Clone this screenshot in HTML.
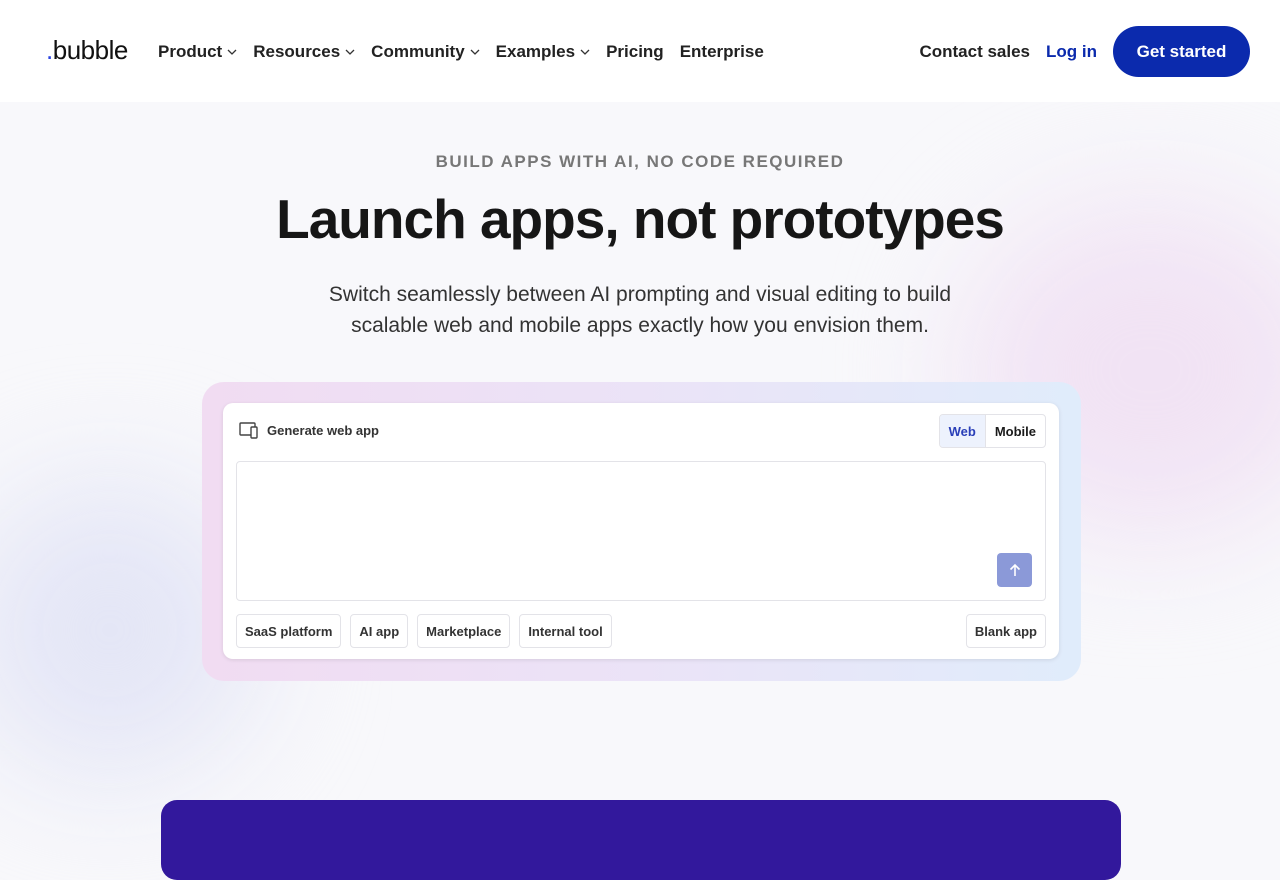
<!DOCTYPE html>
<html><head><meta charset="utf-8"><style>
*{box-sizing:border-box;margin:0;padding:0}
body{width:1280px;height:853px;overflow:hidden;font-family:"Liberation Sans",sans-serif;background:#f8f8fb;position:relative;color:#1a1a1a}
.blob{position:absolute;border-radius:50%;filter:blur(60px)}
header{position:absolute;top:0;left:0;width:1280px;height:102px;background:#fff;z-index:2}
.logo{position:absolute;left:46px;top:35px;font-size:26px;font-weight:400;letter-spacing:-0.5px;color:#111}
.logo i{color:#2b44e0;font-style:normal}
nav{position:absolute;left:158px;top:42px;display:flex;gap:16px;font-size:17px;font-weight:bold;color:#222}
nav span svg{margin-left:5px;vertical-align:2px}
.right{position:absolute;right:30px;top:26px;display:flex;align-items:center;font-size:17px;font-weight:bold}
.btn{background:#0b2aad;color:#fff;border-radius:26px;width:137px;height:51px;display:flex;align-items:center;justify-content:center;margin-left:16px}
.eyebrow{position:absolute;top:152px;width:100%;text-align:center;font-size:17px;letter-spacing:1.5px;color:#777;font-weight:bold}
h1{position:absolute;top:187px;width:100%;text-align:center;font-size:55px;font-weight:bold;letter-spacing:-1px;color:#161616}
.sub{position:absolute;top:279px;width:100%;text-align:center;font-size:21px;line-height:31px;color:#333}
.outer{position:absolute;left:202px;top:382px;width:879px;height:299px;border-radius:22px;background:linear-gradient(90deg,#f1dcf2,#ebe3f7 50%,#e0ecfb)}
.card{position:absolute;left:223px;top:403px;width:836px;height:256px;background:#fff;border-radius:10px;box-shadow:0 1px 4px rgba(0,0,0,.1)}
.gen{position:absolute;left:16px;top:19px;font-size:13px;font-weight:bold;color:#333;display:flex;align-items:center;gap:8px}
.tog{position:absolute;right:13px;top:11px;display:flex;border:1px solid #e3e3e8;border-radius:4px;font-size:13px;font-weight:bold;height:34px;overflow:hidden}
.tog div{padding:0 9px;display:flex;align-items:center}
.ta{position:absolute;left:13px;top:58px;width:810px;height:140px;border:1px solid #e3e3e8;border-radius:4px}
.send{position:absolute;right:13px;bottom:13px;width:35px;height:34px;border-radius:4px;background:#8b99d8;display:flex;align-items:center;justify-content:center}
.chips{position:absolute;top:211px;left:13px;right:13px;display:flex;gap:9px}
.chip{height:34px;border:1px solid #e3e3e8;border-radius:4px;font-size:13px;font-weight:bold;color:#333;display:flex;align-items:center;padding:0 8px}
.purple{position:absolute;left:161px;top:800px;width:960px;height:80px;border-radius:16px;background:#32189c}
</style></head><body>
<div class="blob" style="left:960px;top:200px;width:380px;height:340px;background:#f1e3f4"></div>
<div class="blob" style="left:-40px;top:480px;width:300px;height:300px;background:#e4e6f6"></div>
<header>
<div class="logo"><i>.</i>bubble</div>
<nav>
<span>Product<svg width="10" height="6" viewBox="0 0 10 6"><path d="M1 1l4 4 4-4" fill="none" stroke="#333" stroke-width="1.3"/></svg></span>
<span>Resources<svg width="10" height="6" viewBox="0 0 10 6"><path d="M1 1l4 4 4-4" fill="none" stroke="#333" stroke-width="1.3"/></svg></span>
<span>Community<svg width="10" height="6" viewBox="0 0 10 6"><path d="M1 1l4 4 4-4" fill="none" stroke="#333" stroke-width="1.3"/></svg></span>
<span>Examples<svg width="10" height="6" viewBox="0 0 10 6"><path d="M1 1l4 4 4-4" fill="none" stroke="#333" stroke-width="1.3"/></svg></span>
<span>Pricing</span><span>Enterprise</span>
</nav>
<div class="right"><span style="color:#222">Contact sales</span><span style="color:#0b2aad;margin-left:16px">Log in</span><div class="btn">Get started</div></div>
</header>
<div class="eyebrow">BUILD APPS WITH AI, NO CODE REQUIRED</div>
<h1>Launch apps, not prototypes</h1>
<div class="sub">Switch seamlessly between AI prompting and visual editing to build<br>scalable web and mobile apps exactly how you envision them.</div>
<div class="outer"></div>
<div class="card">
<div class="gen"><svg width="20" height="17" viewBox="0 0 20 17"><rect x="1" y="1" width="15" height="12" rx="1" fill="none" stroke="#444" stroke-width="1.4"/><rect x="12" y="5" width="6" height="11" rx="1" fill="#fff" stroke="#444" stroke-width="1.4"/></svg>Generate web app</div>
<div class="tog"><div style="background:#edf2fd;color:#2a3fb8;border-right:1px solid #e3e3e8">Web</div><div>Mobile</div></div>
<div class="ta"><div class="send"><svg width="12" height="14" viewBox="0 0 12 14"><path d="M6 13V2M1.5 6.5L6 2l4.5 4.5" fill="none" stroke="#fff" stroke-width="1.6"/></svg></div></div>
<div class="chips"><div class="chip">SaaS platform</div><div class="chip">AI app</div><div class="chip">Marketplace</div><div class="chip">Internal tool</div><div class="chip" style="margin-left:auto">Blank app</div></div>
</div>
<div class="purple"></div>
</body></html>
